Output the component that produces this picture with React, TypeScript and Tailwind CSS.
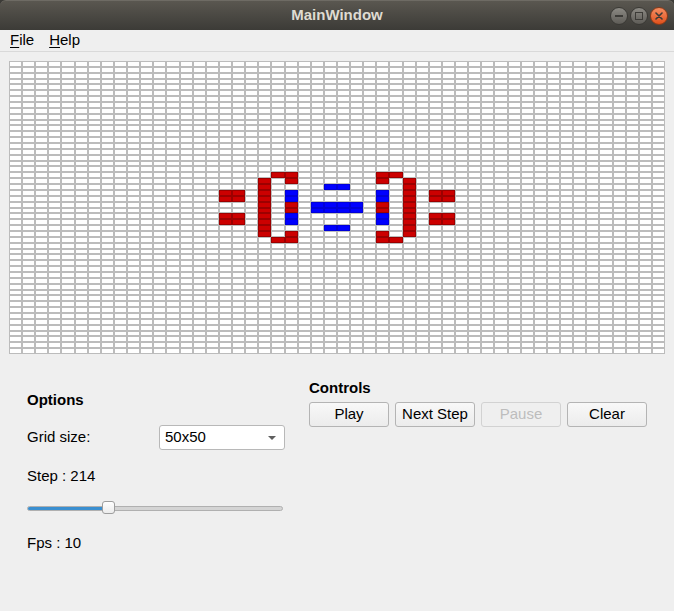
import React from 'react';

const COLS = 50;
const ROWS = 50;

// left half of the pattern, mirrored onto the right (c -> 49 - c)
const redLeft: [number, number][] = [
  [22, 16], [22, 17], [23, 16], [23, 17],
  [26, 16], [26, 17], [27, 16], [27, 17],
  [20, 19], [21, 19], [22, 19], [23, 19], [24, 19], [25, 19], [26, 19], [27, 19], [28, 19], [29, 19],
  [19, 20], [19, 21], [20, 21],
  [30, 20], [29, 21], [30, 21],
  [24, 21], [25, 21],
];
const blueLeft: [number, number][] = [
  [22, 21], [23, 21], [26, 21], [27, 21],
  [21, 24], [28, 24],
  [24, 23], [25, 23], [24, 24], [25, 24],
];

function buildCells() {
  const map = new Map<string, 'r' | 'b'>();
  for (const [r, c] of redLeft) {
    map.set(`${r}-${c}`, 'r');
    map.set(`${r}-${49 - c}`, 'r');
  }
  for (const [r, c] of blueLeft) {
    map.set(`${r}-${c}`, 'b');
    map.set(`${r}-${49 - c}`, 'b');
  }
  return map;
}

const cells = buildCells();

function Board() {
  const items = [];
  for (let r = 0; r < ROWS; r++) {
    for (let c = 0; c < COLS; c++) {
      const v = cells.get(`${r}-${c}`);
      const cls =
        v === 'r'
          ? 'bg-[#cc0000] border-[#9c0000]'
          : v === 'b'
          ? 'bg-[#0000ff] border-[#0000d8]'
          : 'bg-white border-[#bcbcbc]';
      items.push(<div key={`${r}-${c}`} className={`border ${cls}`} />);
    }
  }
  return (
    <div className="grid h-[293px] w-[656px] grid-cols-[repeat(50,minmax(0,1fr))] grid-rows-[repeat(50,minmax(0,1fr))]">
      {items}
    </div>
  );
}

function TitleBar() {
  return (
    <div className="relative flex h-[30px] items-center justify-center rounded-t-[6px] bg-linear-to-b from-[#5a5750] to-[#3c3b37] border-t border-[#6e6b64]">
      <span className="text-[15px] font-bold text-[#dfdbd2]">MainWindow</span>
      <div className="absolute right-[6px] top-[6px] flex gap-[2px]">
        <div className="flex h-[18px] w-[18px] items-center justify-center rounded-full border border-[#3a3935] bg-linear-to-b from-[#8c8a84] to-[#5e5c57]">
          <div className="h-[2px] w-[8px] bg-[#3c3b37]" />
        </div>
        <div className="flex h-[18px] w-[18px] items-center justify-center rounded-full border border-[#3a3935] bg-linear-to-b from-[#8c8a84] to-[#5e5c57]">
          <div className="h-[8px] w-[8px] border-[1.5px] border-[#3c3b37]" />
        </div>
        <div className="flex h-[18px] w-[18px] items-center justify-center rounded-full border border-[#8a3a18] bg-linear-to-b from-[#f48d60] to-[#df4f17]">
          <svg width="8" height="8" viewBox="0 0 8 8">
            <path d="M1 1 L7 7 M7 1 L1 7" stroke="#3c3b37" strokeWidth="1.6" strokeLinecap="round" />
          </svg>
        </div>
      </div>
    </div>
  );
}

function Button({ label, disabled }: { label: string; disabled?: boolean }) {
  return (
    <div
      className={`flex h-[25px] w-[80px] items-center justify-center rounded-[3px] border ${
        disabled
          ? 'border-[#d2d2d2] bg-[#efefef] text-[#bdbdbd]'
          : 'border-[#b4b4b4] bg-linear-to-b from-[#f8f8f8] to-[#ececec] text-black'
      }`}
    >
      {label}
    </div>
  );
}

export default function App() {
  return (
    <div
      className="h-[611px] w-[674px] overflow-hidden bg-[#3c3b37] text-[15px] text-black"
      style={{ fontFamily: '"Liberation Sans", Arial, sans-serif' }}
    >
      <TitleBar />
      <div className="flex h-[22px] items-center gap-[15px] border-b border-[#d9d9d9] bg-[#efefef] pl-[10px]">
        <span>
          <span className="underline underline-offset-2">F</span>ile
        </span>
        <span>
          <span className="underline underline-offset-2">H</span>elp
        </span>
      </div>
      <div className="h-[559px] bg-[#efefef] px-[9px] pt-[9px]">
        <Board />
        <div className="flex">
          {/* Options */}
          <div className="ml-[18px] flex w-[258px] flex-col pt-[36px]">
            <div className="h-[20px] leading-[20px] font-bold">Options</div>
            <div className="mt-[15px] flex h-[25px] items-center justify-between">
              <span>Grid size:</span>
              <div className="flex h-[25px] w-[126px] items-center justify-between rounded-[3px] border border-[#b8b8b8] bg-white pl-[5px] pr-[8px]">
                <span>50x50</span>
                <svg width="8" height="4" viewBox="0 0 8 4">
                  <path d="M0 0 L8 0 L4 4 Z" fill="#5e5e5e" />
                </svg>
              </div>
            </div>
            <div className="mt-[16px] h-[20px] leading-[20px]">Step : 214</div>
            <div className="relative mt-[14px] flex h-[16px] items-center">
              <div className="h-[5px] w-[256px] overflow-hidden rounded-full border border-[#b0b0b0] bg-[#d4d4d4]">
                <div className="h-full w-[76px] bg-[#3a8fd0]" />
              </div>
              <div className="absolute left-[75px] top-[1px] h-[13px] w-[13px] rounded-[3px] border border-[#9e9e9e] bg-linear-to-b from-white to-[#ececec]" />
            </div>
            <div className="mt-[17px] h-[20px] leading-[20px]">Fps : 10</div>
          </div>
          {/* Controls */}
          <div className="ml-[24px] flex flex-col pt-[24px]">
            <div className="h-[20px] leading-[20px] font-bold">Controls</div>
            <div className="mt-[4px] flex gap-[6px]">
              <Button label="Play" />
              <Button label="Next Step" />
              <Button label="Pause" disabled />
              <Button label="Clear" />
            </div>
          </div>
        </div>
      </div>
    </div>
  );
}
